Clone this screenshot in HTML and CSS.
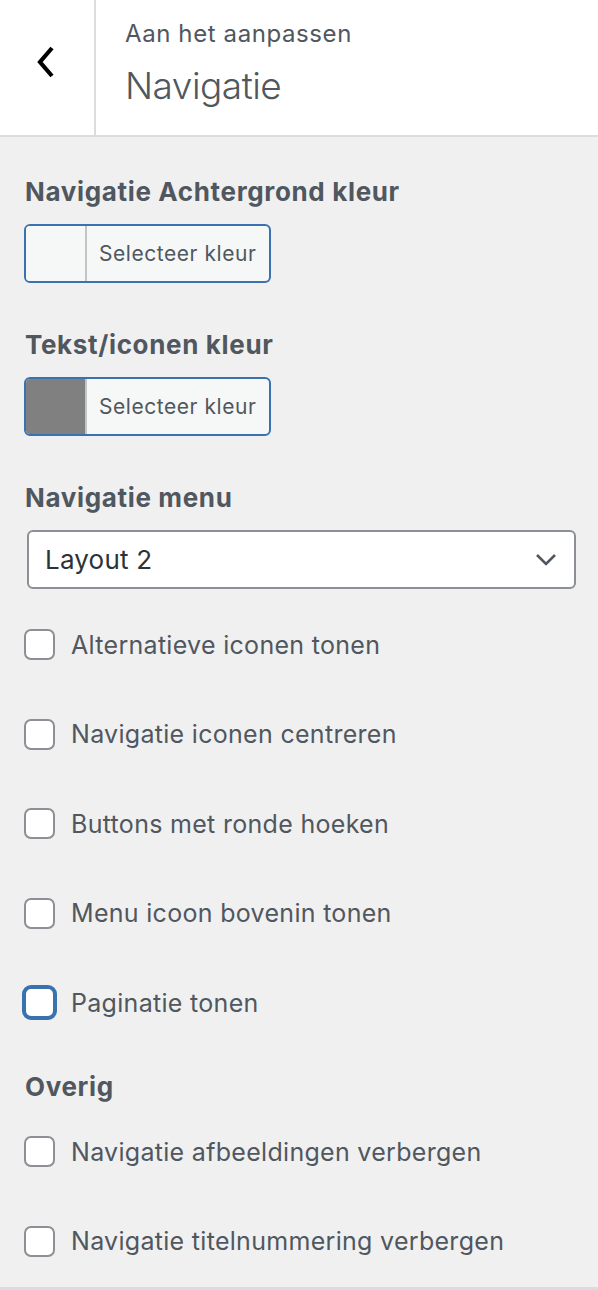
FILE: index.html
```html
<!DOCTYPE html>
<html lang="nl">
<head>
<meta charset="utf-8">
<title>Navigatie</title>
<link rel="stylesheet" href="styles.css">
</head>
<body>
<div class="panel">
  <header class="header">
    <div class="back">
      <svg width="24" height="34" viewBox="0 0 24 34" aria-hidden="true"><polyline points="17,3 5,17 17,31" fill="none" stroke="#000" stroke-width="4.2"/></svg>
    </div>
    <div class="titles">
      <div class="subtitle">Aan het aanpassen</div>
      <div class="title">Navigatie</div>
    </div>
  </header>
  <main class="content">
    <h3 class="control-title first">Navigatie Achtergrond kleur</h3>
    <div class="color-btn"><span class="swatch swatch-light"></span><span class="color-label">Selecteer kleur</span></div>

    <h3 class="control-title">Tekst/iconen kleur</h3>
    <div class="color-btn"><span class="swatch swatch-gray"></span><span class="color-label">Selecteer kleur</span></div>

    <h3 class="control-title">Navigatie menu</h3>
    <div class="select">
      <span class="select-value">Layout 2</span>
      <svg class="select-arrow" width="22" height="14" viewBox="0 0 22 14" aria-hidden="true"><polyline points="2,2 11,11 20,2" fill="none" stroke="#50575e" stroke-width="2.6"/></svg>
    </div>

    <div class="checks">
      <label class="check"><span class="box"></span><span class="check-label">Alternatieve iconen tonen</span></label>
      <label class="check"><span class="box"></span><span class="check-label">Navigatie iconen centreren</span></label>
      <label class="check"><span class="box"></span><span class="check-label">Buttons met ronde hoeken</span></label>
      <label class="check"><span class="box"></span><span class="check-label">Menu icoon bovenin tonen</span></label>
      <label class="check"><span class="box box-focus"></span><span class="check-label">Paginatie tonen</span></label>
    </div>

    <h3 class="control-title overig">Overig</h3>
    <div class="checks checks-last">
      <label class="check"><span class="box"></span><span class="check-label">Navigatie afbeeldingen verbergen</span></label>
      <label class="check"><span class="box"></span><span class="check-label">Navigatie titelnummering verbergen</span></label>
    </div>
  </main>
</div>
</body>
</html>
```

FILE: styles.css
```css
* { box-sizing: border-box; }
html, body { margin: 0; padding: 0; }
body {
  background: #f0f0f1;
  font-family: Inter, "Noto Sans", "Liberation Sans", sans-serif;
  color: #50575e;
  width: 598px;
  height: 1290px;
  overflow: hidden;
}
.panel {
  height: 1290px;
  display: flex;
  flex-direction: column;
}
.header {
  background: #fff;
  height: 137px;
  border-bottom: 2px solid #dcdcde;
  display: flex;
  flex-shrink: 0;
}
.back {
  width: 96px;
  border-right: 2px solid #dcdcde;
  display: flex;
  align-items: center;
  justify-content: center;
  padding-bottom: 12px;
}
.titles {
  padding: 18px 0 0 29px;
}
.subtitle {
  font-size: 24px;
  letter-spacing: 0.6px;
  line-height: 32px;
  color: #50575e;
}
.title {
  font-size: 37px;
  font-weight: 300;
  line-height: 46px;
  margin-top: 13px;
  color: #50575e;
  letter-spacing: -0.5px;
}
.content {
  flex: 1;
  padding: 0 22px 0 24px;
  border-bottom: 3px solid #dcdcde;
}
.control-title {
  font-size: 26px;
  letter-spacing: 0.65px;
  font-weight: 700;
  line-height: 32px;
  margin: 46px 0 16px 1px;
  color: #50575e;
}
.control-title.first { margin-top: 39px; }
.color-btn {
  width: 247px;
  height: 59px;
  border: 2px solid #3a72b0;
  border-radius: 6px;
  background: #f6f7f7;
  display: flex;
  overflow: hidden;
}
.swatch {
  width: 61px;
  border-right: 2px solid #c3c4c7;
}
.swatch-light { background: #f6f7f7; }
.swatch-gray { background: #808080; }
.color-label {
  display: flex;
  align-items: center;
  padding-left: 12px;
  font-size: 21px;
  letter-spacing: 0.55px;
  color: #50575e;
}
.select {
  margin-left: 3px;
  height: 59px;
  width: 549px;
  border: 2px solid #8c8f94;
  border-radius: 6px;
  background: #fff;
  display: flex;
  align-items: center;
  justify-content: space-between;
  padding: 0 17px 0 16px;
}
.select-value {
  font-size: 26px;
  color: #2c3338;
  letter-spacing: 0.2px;
}
.checks {
  margin-top: 40px;
  display: flex;
  flex-direction: column;
  gap: 58.5px;
}
.checks-last { margin-top: 33px; }
.check {
  display: flex;
  align-items: center;
  height: 31px;
}
.box {
  width: 31px;
  height: 31px;
  border: 2px solid #8c8f94;
  border-radius: 7px;
  background: #fff;
  flex-shrink: 0;
}
.box-focus {
  border-color: #3a72b0;
  box-shadow: 0 0 0 2px #3a72b0;
}
.check-label {
  margin-left: 16px;
  font-size: 25px;
  letter-spacing: 0.3px;
  color: #50575e;
}
.overig { margin-top: 53px; margin-bottom: 0; }
```
